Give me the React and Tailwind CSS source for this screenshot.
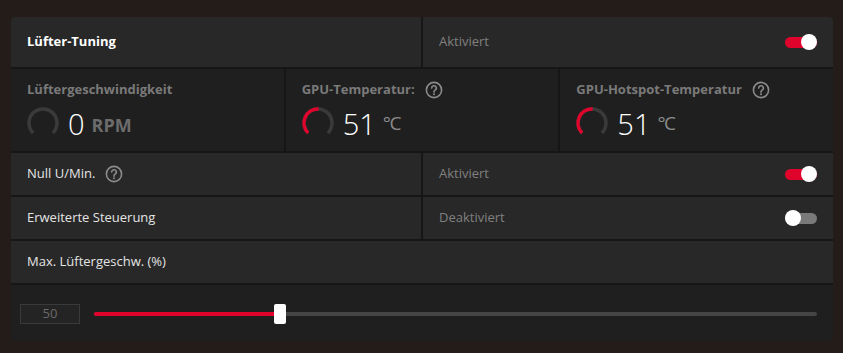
import React from "react";

const RED = "#e0042d";

function arcPoint(cx, cy, r, deg) {
  const a = (deg * Math.PI) / 180;
  return [cx + r * Math.sin(a), cy - r * Math.cos(a)];
}

function Gauge({ value }) {
  const c = 18;
  const r = 14;
  const start = -135;
  const end = start + (270 * value) / 100;
  const [sx, sy] = arcPoint(c, c, r, start);
  const [ex, ey] = arcPoint(c, c, r, 135);
  const [vx, vy] = arcPoint(c, c, r, end);
  return (
    <svg width="36" height="36" viewBox="0 0 36 36" className="shrink-0">
      <path
        d={`M ${sx} ${sy} A ${r} ${r} 0 1 1 ${ex} ${ey}`}
        fill="none"
        stroke="#3a3a3a"
        strokeWidth="3.5"
      />
      {value > 0 && (
        <path
          d={`M ${sx} ${sy} A ${r} ${r} 0 ${end - start > 180 ? 1 : 0} 1 ${vx} ${vy}`}
          fill="none"
          stroke={RED}
          strokeWidth="3.5"
        />
      )}
    </svg>
  );
}

function HelpIcon() {
  return (
    <svg width="18" height="18" viewBox="0 0 18 18" className="shrink-0">
      <circle cx="9" cy="9" r="7.6" fill="none" stroke="#8a8a8a" strokeWidth="1.6" />
      <path
        d="M6.7 7.1a2.3 2.3 0 1 1 3.4 2c-.7.4-1.1.8-1.1 1.6v.5"
        fill="none"
        stroke="#8a8a8a"
        strokeWidth="1.6"
        strokeLinecap="round"
      />
      <circle cx="9" cy="13.2" r="1" fill="#8a8a8a" />
    </svg>
  );
}

function Toggle({ on }) {
  return (
    <div className="relative w-[32px] h-[16px]">
      <div
        className={`absolute left-0 right-0 top-[2.5px] h-[11px] rounded-full ${
          on ? "bg-[#e0042d]" : "bg-[#7a7a7a]"
        }`}
      />
      <div
        className={`absolute top-0 w-[16px] h-[16px] rounded-full bg-white ${
          on ? "right-0" : "left-0"
        }`}
      />
    </div>
  );
}

function Stat({ title, help, value, unit, unitBold, gauge }) {
  return (
    <div className="bg-[#1f1f1f] pl-4 pt-[12px]">
      <div className="flex items-center gap-[10px] h-[18px]">
        <span className="text-[13px] font-bold text-[#7a7a7a]">{title}</span>
        {help && <HelpIcon />}
      </div>
      <div className="flex items-center mt-[6px] -ml-[2px]">
        <Gauge value={gauge} />
        <span className="ml-[7px] text-[29px] leading-none font-light text-white">{value}</span>
        <span
          className={
            unitBold
              ? "ml-[7px] mt-[4px] text-[18px] font-bold text-[#6c6c6c] leading-none"
              : "ml-[7px] mt-[0px] text-[19px] text-[#8a8a8a] leading-none tracking-[-1.5px]"
          }
        >
          {unit}
        </span>
      </div>
    </div>
  );
}

function Row({ label, help, status, on, bold }) {
  return (
    <div className="grid grid-cols-2 gap-[2px]">
      <div className="bg-[#282828] flex items-center gap-[10px] pl-4">
        <span className={bold ? "text-[13px] font-bold text-white" : "text-[13px] text-[#e4e4e4]"}>
          {label}
        </span>
        {help && <HelpIcon />}
      </div>
      <div className="bg-[#282828] flex items-center justify-between pl-4 pr-4">
        <span className="text-[13px] text-[#808080]">{status}</span>
        <Toggle on={on} />
      </div>
    </div>
  );
}

export default function App() {
  const pct = 25.7;
  return (
    <div
      className="w-[843px] h-[353px] bg-[#241c19] pt-[17px] pl-[11px]"
      style={{ fontFamily: '"Open Sans", "Noto Sans", sans-serif' }}
    >
      <div className="w-[822px] h-[324px] rounded-[4px] overflow-hidden bg-[#161616] flex flex-col gap-[2px]">
        <div className="h-[50px] grid">
          <Row label="Lüfter-Tuning" status="Aktiviert" on bold />
        </div>
        <div className="h-[82px] grid grid-cols-3 gap-[2px]">
          <Stat title="Lüftergeschwindigkeit" value="0" unit="RPM" unitBold gauge={0} />
          <Stat title="GPU-Temperatur:" help value="51" unit="°C" gauge={51} />
          <Stat title="GPU-Hotspot-Temperatur" help value="51" unit="°C" gauge={51} />
        </div>
        <div className="h-[42px] grid">
          <Row label="Null U/Min." help status="Aktiviert" on />
        </div>
        <div className="h-[42px] grid">
          <Row label="Erweiterte Steuerung" status="Deaktiviert" on={false} />
        </div>
        <div className="h-[42px] bg-[#282828] flex items-center pl-4">
          <span className="text-[13px] text-[#e4e4e4]">Max. Lüftergeschw. (%)</span>
        </div>
        <div className="h-[56px] bg-[#1f1f1f] flex items-center pl-[9px] pr-4 pt-[1px]">
          <div className="w-[60px] h-[20px] border border-[#3a3a3a] bg-[#242424] flex items-center justify-center text-[13px] text-[#6a6a6a]">
            50
          </div>
          <div className="relative flex-1 ml-[14px] h-[20px] flex items-center">
            <div className="w-full h-[4px] rounded-full bg-[#454545]">
              <div className="h-full rounded-full bg-[#e0042d]" style={{ width: `${pct}%` }} />
            </div>
            <div
              className="absolute top-0 w-[12px] h-[20px] rounded-[2px] bg-white -translate-x-1/2"
              style={{ left: `${pct}%` }}
            />
          </div>
        </div>
      </div>
    </div>
  );
}
